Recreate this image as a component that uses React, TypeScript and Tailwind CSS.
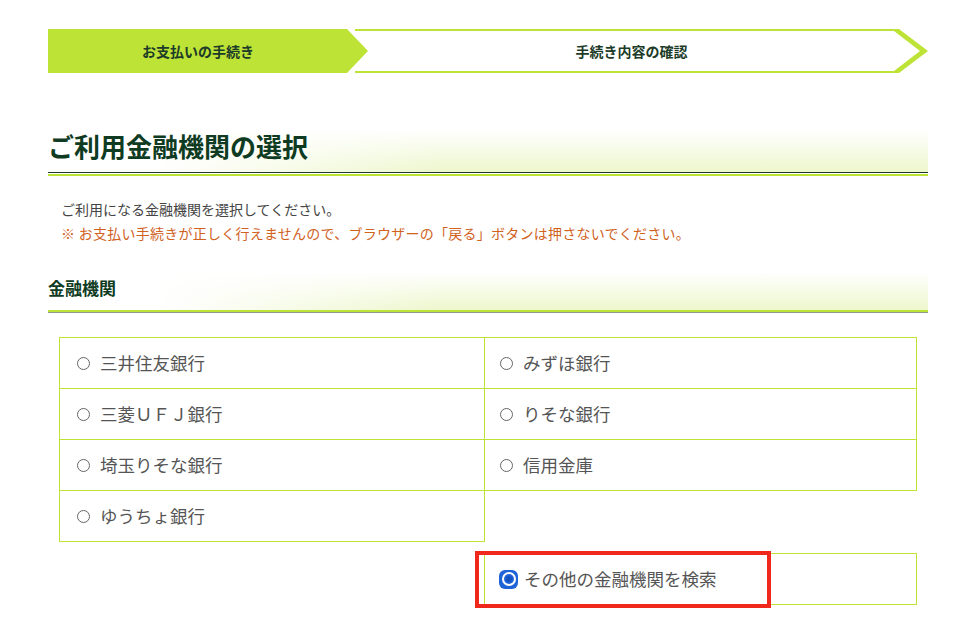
import React from "react";

const banks: [string, string | null][] = [
  ["三井住友銀行", "みずほ銀行"],
  ["三菱ＵＦＪ銀行", "りそな銀行"],
  ["埼玉りそな銀行", "信用金庫"],
  ["ゆうちょ銀行", null],
];

function Radio() {
  return (
    <span className="inline-block w-[13px] h-[13px] rounded-full border border-[#666] bg-white shrink-0" />
  );
}

function Cell({ label, right }: { label: string; right?: boolean }) {
  return (
    <div
      className={`h-[50px] flex items-center ${right ? "pl-[15px] w-[431px]" : "pl-[17px] w-[424px]"}`}
    >
      <Radio />
      <span className="ml-[10px] text-[17.5px] text-[#555] leading-none">{label}</span>
    </div>
  );
}

export default function App() {
  return (
    <div
      className="w-[959px] h-[643px] bg-white overflow-hidden"
      style={{ fontFamily: '"Noto Sans CJK JP", "Noto Sans", sans-serif' }}
    >
      <div className="ml-[48px] w-[880px]">
        {/* Steps */}
        <div className="pt-[29px] flex h-[73px]">
          <div className="relative z-10 w-[324px] h-[44px] bg-white [clip-path:polygon(0_0,301px_0,324px_50%,301px_100%,0_100%)]">
            <div className="w-[320px] h-[44px] bg-[#bce336] [clip-path:polygon(0_0,299px_0,320px_50%,299px_100%,0_100%)] flex items-center justify-center pr-[20px]">
              <span className="text-[14px] font-bold text-[#1c3b28]">お支払いの手続き</span>
            </div>
          </div>
          <div className="relative -ml-[17px] w-[573px] h-[44px] bg-[#bce336] [clip-path:polygon(0_0,calc(100%-29px)_0,100%_50%,calc(100%-29px)_100%,0_100%)]">
            <div className="absolute left-0 top-[2px] bottom-[2px] right-[8px] bg-white [clip-path:polygon(0_0,calc(100%-26px)_0,100%_50%,calc(100%-26px)_100%,0_100%)] flex items-center justify-center pr-[12px]">
              <span className="text-[14px] font-bold text-[#1c3b28]">手続き内容の確認</span>
            </div>
          </div>
        </div>

        {/* Heading */}
        <div className="mt-[49px] h-[50px] flex items-center bg-[linear-gradient(to_right,#ffffff_12%,rgba(255,255,255,0)_45%),linear-gradient(to_bottom,#ffffff_15%,#edf7cc)]">
          <h1 className="text-[26px] font-bold text-[#0e3b22] leading-none -mt-[2px]">ご利用金融機関の選択</h1>
        </div>
        <div className="h-px bg-[#1d3b2a]" />
        <div className="h-px bg-white" />
        <div className="h-[2px] bg-[#bce336]" />

        {/* Description */}
        <div className="pl-[13px] mt-[21px] text-[14px] leading-[24px]">
          <p className="text-[#444]">ご利用になる金融機関を選択してください。</p>
          <p className="text-[#d0621e] tracking-[0.25px]">※ お支払い手続きが正しく行えませんので、ブラウザーの「戻る」ボタンは押さないでください。</p>
        </div>

        {/* Subheading */}
        <div className="mt-[23px] h-[42px] flex items-center bg-[linear-gradient(to_right,#ffffff_12%,rgba(255,255,255,0)_45%),linear-gradient(to_bottom,#ffffff_10%,#edf7cc)]">
          <h2 className="text-[17px] font-bold text-[#0e3b22] leading-none -mt-[4px]">金融機関</h2>
        </div>
        <div className="h-[2px] bg-[#bce336]" />
        <div className="h-px bg-[#8c9a8c]" />

        {/* Table */}
        <div className="mt-[24px] ml-[11px] w-[858px]">
          {banks.map(([l, r], i) => (
            <div key={i} className="flex">
              <div
                className={`border-[#bce336] border-l border-r ${i === 0 ? "border-t" : ""} border-b`}
              >
                <Cell label={l} />
              </div>
              {r ? (
                <div className={`border-[#bce336] border-r ${i === 0 ? "border-t" : ""} border-b`}>
                  <Cell label={r} right />
                </div>
              ) : null}
            </div>
          ))}
          <div className="flex mt-[11px]">
            <div className="w-[425px]" />
            <div className="relative w-[433px] h-[52px] border border-[#bce336] flex items-center pl-[14px]">
              <span className="w-[19px] h-[19px] rounded-[6px] bg-[#1f63d8] flex items-center justify-center shrink-0">
                <span className="w-[14px] h-[14px] rounded-full bg-white flex items-center justify-center">
                  <span className="w-[10px] h-[10px] rounded-full bg-[#1f63d8] flex items-center justify-center">
                    <span className="w-[6px] h-[6px] rounded-full bg-[#1552c0]" />
                  </span>
                </span>
              </span>
              <span className="ml-[6px] text-[17.5px] text-[#555] leading-none">その他の金融機関を検索</span>
              <div className="absolute -left-[10px] -top-[3px] w-[296px] h-[57px] border-[4px] border-[#f0281c]" />
            </div>
          </div>
        </div>
      </div>
    </div>
  );
}
